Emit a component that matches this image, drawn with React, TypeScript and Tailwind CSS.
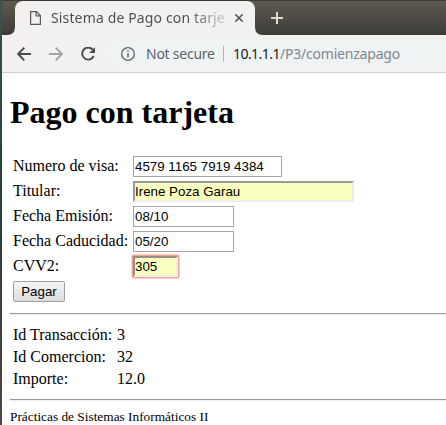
import type { ReactNode } from 'react';

const plain = 'border border-[#a6a6a6] bg-white px-px';
const filled = 'border-2 border-r-[#eeeeee] border-b-[#eeeeee] bg-[#faffbd]';

function Field({ label, value, box }: { label: string; value: string; box: string }) {
  return (
    <div className="flex h-[21px]">
      <label className="w-[120px] shrink-0 whitespace-nowrap leading-[19px]">{label}</label>
      <input
        defaultValue={value}
        className={`h-[21px] font-['Liberation_Sans',sans-serif] text-[13.333px] text-black outline-none ${box}`}
      />
    </div>
  );
}

function Detail({ label, children }: { label: string; children: ReactNode }) {
  return (
    <div className="flex h-[22px] leading-[22px]">
      <span className="w-[104px] shrink-0 whitespace-nowrap">{label}</span>
      <span>{children}</span>
    </div>
  );
}

function Rule() {
  return <hr className="h-[2px] border-0 border-t border-b border-t-[#9a9a9a] border-b-[#eeeeee]" />;
}

function TabStrip() {
  return (
    <div className="flex h-[35px] border-t border-[#3c3b37] bg-linear-to-b from-[#5d5a50] to-[#3e3c38]">
      <div className="w-[13px] shrink-0">
        <svg className="block" width="13" height="34" viewBox="0 0 13 34">
          <path d="M5 34Q13 34 13 26V34Z" fill="#f2f1f0" />
        </svg>
      </div>
      <div className="flex w-[240px] shrink-0 items-center rounded-t-[8px] bg-[#f2f1f0] pl-[15px]">
        <svg className="shrink-0" width="11" height="14" viewBox="0 0 11 14" fill="none" stroke="#5a5a5a" strokeWidth="1.2">
          <path d="M.6.6H6.5L10.4 4.5V13.4H.6Z" />
          <path d="M6.2.8V4.8H10.2" />
        </svg>
        <span className="mb-[2px] ml-[10px] w-[175px] overflow-hidden whitespace-nowrap bg-linear-to-r from-[#4d4d4d] from-78% to-[#4d4d4d]/20 bg-clip-text font-['Noto_Sans',sans-serif] text-[14px] tracking-[0.14px] text-transparent">
          Sistema de Pago con tarje
        </span>
        <svg className="ml-[9px] shrink-0" width="8" height="8" viewBox="0 0 8 8" stroke="#4d4d4d" strokeWidth="1.5">
          <path d="M.3.3L7.7 7.7M7.7.3L.3 7.7" />
        </svg>
      </div>
      <svg className="block shrink-0" width="36" height="34" viewBox="0 0 36 34">
        <path d="M0 34V26Q0 34 8 34Z" fill="#f2f1f0" />
        <path d="M22 11V23M16 17H28" stroke="#dfdbd2" strokeWidth="2" />
      </svg>
    </div>
  );
}

function Toolbar() {
  return (
    <div className="flex h-[38px] items-center border-b border-[#cfcecd] bg-[#f2f1f0] pl-[15px]">
      <svg className="shrink-0" width="14" height="14" viewBox="0 0 14 14" fill="none" stroke="#4a4a4a" strokeWidth="1.9">
        <path d="M14 7H1.5M7.3.7L1.2 7L7.3 13.3" />
      </svg>
      <svg className="ml-[18px] shrink-0" width="14" height="14" viewBox="0 0 14 14" fill="none" stroke="#a3a3a1" strokeWidth="1.9">
        <path d="M0 7H12.5M6.7.7L12.8 7L6.7 13.3" />
      </svg>
      <svg className="ml-[18px] shrink-0" width="14" height="14" viewBox="0 0 14 14">
        <path d="M11.6 2.5A6 6 0 1 0 12.7 9" fill="none" stroke="#4a4a4a" strokeWidth="1.9" />
        <path d="M14 .2V6H8.2Z" fill="#4a4a4a" />
      </svg>
      <div className="ml-[14px] flex h-[28px] flex-1 items-center overflow-hidden whitespace-nowrap rounded-l-full bg-[#eff3f4] pl-[12px] font-['Noto_Sans',sans-serif] text-[14px] text-[#5f6368]">
        <svg className="shrink-0" width="14" height="14" viewBox="0 0 14 14">
          <circle cx="7" cy="7" r="6.3" fill="none" stroke="#5f6368" strokeWidth="1.3" />
          <path d="M7 6.2V10.6M7 3.2V4.8" stroke="#5f6368" strokeWidth="1.5" />
        </svg>
        <span className="ml-[11px] w-[69px] tracking-[-0.25px]">Not secure</span>
        <span className="ml-[8px] h-[16px] w-px shrink-0 bg-[#b1b4b6]" />
        <span className="ml-[9px]">
          <span className="tracking-[-0.55px] text-[#202124]">10.1.1.1</span>
          <span className="tracking-[-0.2px] text-[#80868b]">/P3/comienzapago</span>
        </span>
      </div>
    </div>
  );
}

export default function App() {
  return (
    <div className="flex h-[425px] w-[446px] overflow-hidden bg-white font-['Liberation_Serif',serif] text-[16px] text-black">
      <div className="w-[2px] shrink-0 bg-linear-to-b from-[#36554b] via-[#273d38] via-50% to-[#4e493f]" />
      <div className="flex min-w-0 flex-1 flex-col">
        <TabStrip />
        <Toolbar />
        <main className="pl-[8px]">
          <h1 className="mt-[21px] h-[37px] whitespace-nowrap text-[32px] leading-[37px] font-bold">
            Pago con tarjeta
          </h1>
          <form className="mt-[25px] flex flex-col gap-1 pl-[3px]">
            <Field label="Numero de visa:" value="4579 1165 7919 4384" box={`w-[149px] ${plain}`} />
            <Field
              label="Titular:"
              value="Irene Poza Garau"
              box={`w-[221px] border-t-[#9a9a9a] border-l-[#9a9a9a] ${filled}`}
            />
            <Field label="Fecha Emisión:" value="08/10" box={`w-[101px] ${plain}`} />
            <Field label="Fecha Caducidad:" value="05/20" box={`w-[101px] ${plain}`} />
            <Field
              label="CVV2:"
              value="305"
              box={`w-[45px] rounded-[1px] border-t-[#a08c86] border-l-[#a08c86] ring-[1.5px] ring-[#f4a48a] ${filled}`}
            />
            <button
              type="button"
              className="h-[21px] w-[52px] rounded-[2px] border border-[#a0a0a0] bg-linear-to-b from-[#f6f6f6] to-[#dddddd] font-['Liberation_Sans',sans-serif] text-[13.333px] leading-[19px]"
            >
              Pagar
            </button>
          </form>
          <div className="mt-[11px]">
            <Rule />
          </div>
          <div className="mt-[9px] mb-[9px] pl-[3px]">
            <Detail label="Id Transacción:">3</Detail>
            <Detail label="Id Comercion:">32</Detail>
            <Detail label="Importe:">12.0</Detail>
          </div>
          <Rule />
          <p className="mt-[8px] text-[13.333px] leading-[16px]">Prácticas de Sistemas Informáticos II</p>
        </main>
      </div>
    </div>
  );
}
